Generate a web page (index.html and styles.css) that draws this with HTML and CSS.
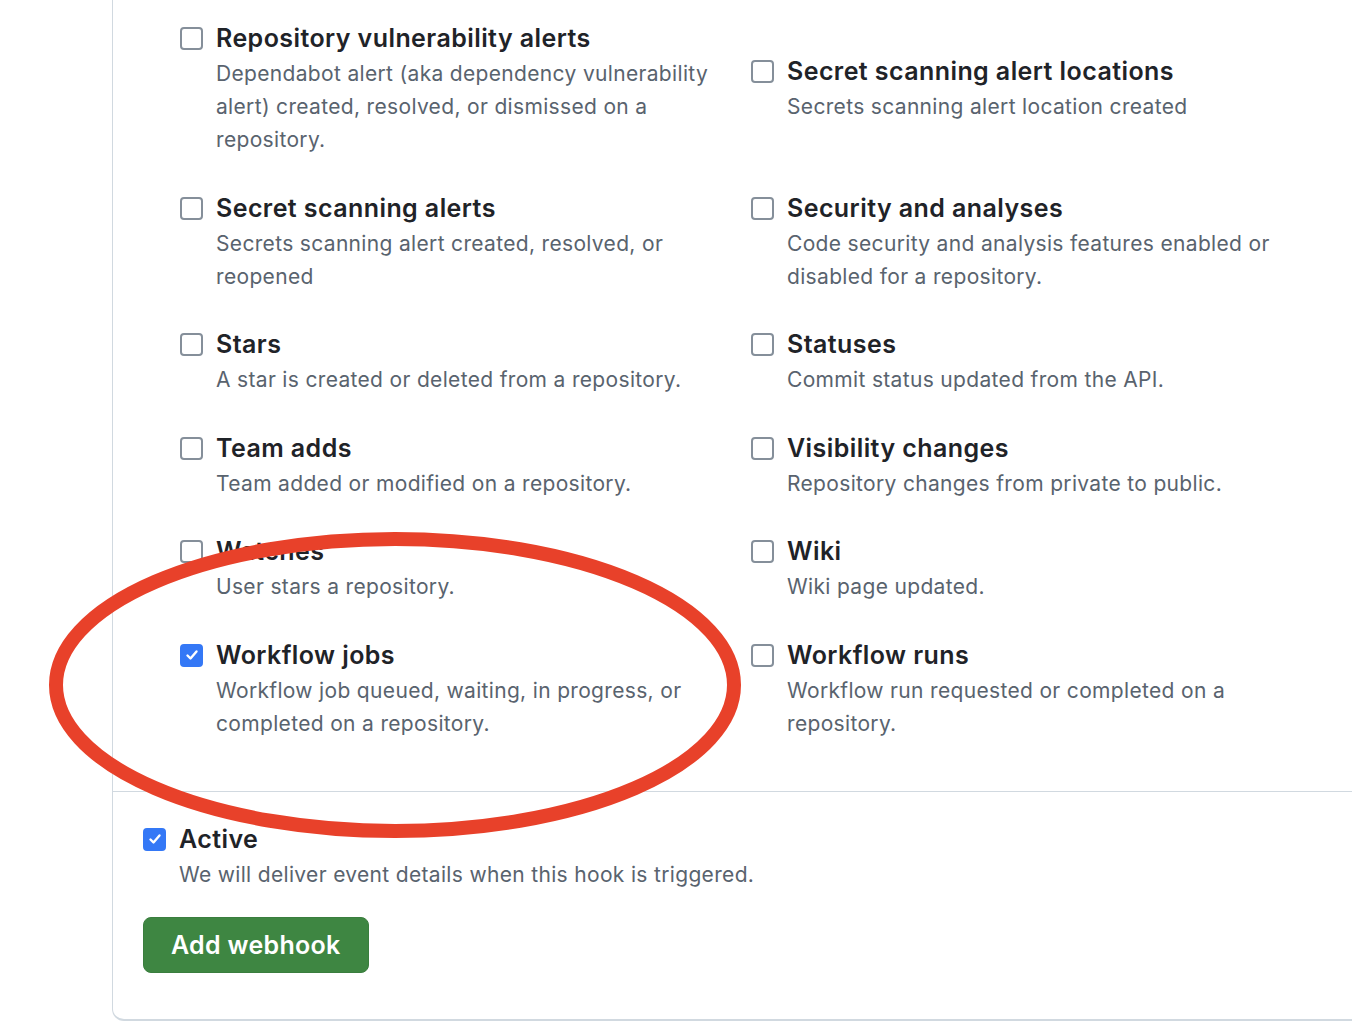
FILE: index.html
```html
<!DOCTYPE html>
<html>
<head>
<meta charset="utf-8">
<link rel="stylesheet" href="styles.css">
</head>
<body>
<div class="box">
  <div class="events">
    <div class="event">
      <div class="event-title"><span class="cb"></span>Repository vulnerability alerts</div>
      <p class="event-desc">Dependabot alert (aka dependency vulnerability alert) created, resolved, or dismissed on a repository.</p>
    </div>
    <div class="event shifted">
      <div class="event-title"><span class="cb"></span>Secret scanning alert locations</div>
      <p class="event-desc">Secrets scanning alert location created</p>
    </div>
    <div class="event">
      <div class="event-title"><span class="cb"></span>Secret scanning alerts</div>
      <p class="event-desc">Secrets scanning alert created, resolved, or reopened</p>
    </div>
    <div class="event">
      <div class="event-title"><span class="cb"></span>Security and analyses</div>
      <p class="event-desc">Code security and analysis features enabled or disabled for a repository.</p>
    </div>
    <div class="event">
      <div class="event-title"><span class="cb"></span>Stars</div>
      <p class="event-desc">A star is created or deleted from a repository.</p>
    </div>
    <div class="event">
      <div class="event-title"><span class="cb"></span>Statuses</div>
      <p class="event-desc">Commit status updated from the API.</p>
    </div>
    <div class="event">
      <div class="event-title"><span class="cb"></span>Team adds</div>
      <p class="event-desc">Team added or modified on a repository.</p>
    </div>
    <div class="event">
      <div class="event-title"><span class="cb"></span>Visibility changes</div>
      <p class="event-desc">Repository changes from private to public.</p>
    </div>
    <div class="event">
      <div class="event-title"><span class="cb"></span>Watches</div>
      <p class="event-desc">User stars a repository.</p>
    </div>
    <div class="event">
      <div class="event-title"><span class="cb"></span>Wiki</div>
      <p class="event-desc">Wiki page updated.</p>
    </div>
    <div class="event">
      <div class="event-title"><span class="cb checked"><svg viewBox="0 0 16 16" width="16" height="16"><path d="M3.5 8.5l3 3 6-7" fill="none" stroke="#fff" stroke-width="2.4" stroke-linecap="round" stroke-linejoin="round"/></svg></span>Workflow jobs</div>
      <p class="event-desc">Workflow job queued, waiting, in progress, or completed on a repository.</p>
    </div>
    <div class="event">
      <div class="event-title"><span class="cb"></span>Workflow runs</div>
      <p class="event-desc">Workflow run requested or completed on a repository.</p>
    </div>
  </div>
  <div class="active">
    <div class="event-title"><span class="cb checked"><svg viewBox="0 0 16 16" width="16" height="16"><path d="M3.5 8.5l3 3 6-7" fill="none" stroke="#fff" stroke-width="2.4" stroke-linecap="round" stroke-linejoin="round"/></svg></span>Active</div>
    <p class="event-desc">We will deliver event details when this hook is triggered.</p>
    <button class="btn-primary">Add webhook</button>
  </div>
</div>
<svg class="annotation" width="1352" height="1030" viewBox="0 0 1352 1030">
  <ellipse cx="395" cy="685" rx="339" ry="146" fill="none" stroke="#e8412a" stroke-width="14"/>
</svg>
</body>
</html>
```
FILE: styles.css
```css
html, body {
  margin: 0;
  padding: 0;
  background: #fff;
  overflow: hidden;
}
body {
  font-family: Inter, "Noto Sans", "Liberation Sans", sans-serif;
  color: #1f2328;
  width: 1352px;
  height: 1030px;
  position: relative;
}
.box {
  margin-left: 112px;
  height: 1021px;
  box-sizing: border-box;
  border-left: 1px solid #d1d9e0;
  border-bottom: 2px solid #d1d9e0;
  border-bottom-left-radius: 12px;
}
.events {
  display: grid;
  grid-template-columns: 571px 1fr;
  row-gap: 33.5px;
  padding: 20px 0 51px 67px;
  border-bottom: 1px solid #d1d9e0;
}
.event.shifted {
  margin-top: 33px;
}
.event-title {
  display: flex;
  align-items: center;
  gap: 14px;
  font-size: 25px;
  letter-spacing: 0.42px;
  font-weight: 600;
  line-height: 37px;
  height: 37px;
  white-space: nowrap;
}
.cb {
  width: 23px;
  height: 23px;
  box-sizing: border-box;
  border: 2px solid #858f9a;
  border-radius: 4px;
  flex: none;
  display: flex;
  align-items: center;
  justify-content: center;
  margin-right: -1px;
}
.cb.checked {
  background: #3478f6;
  border-color: #3478f6;
}
.event-desc {
  margin: 0;
  padding-left: 36px;
  font-size: 21px;
  letter-spacing: 0.33px;
  line-height: 33px;
  color: #59636e;
  max-width: 500px;
}
.active {
  padding: 29px 0 0 30px;
}
.active .event-desc {
  max-width: none;
}
.btn-primary {
  margin-top: 26px;
  height: 56px;
  padding: 0 27px;
  background: #3e8642;
  color: #fff;
  border: 1px solid #3a7e3e;
  border-radius: 8px;
  font-family: inherit;
  font-size: 25px;
  letter-spacing: 0.3px;
  font-weight: 600;
}
.annotation {
  position: absolute;
  left: 0;
  top: 0;
  pointer-events: none;
}
```
